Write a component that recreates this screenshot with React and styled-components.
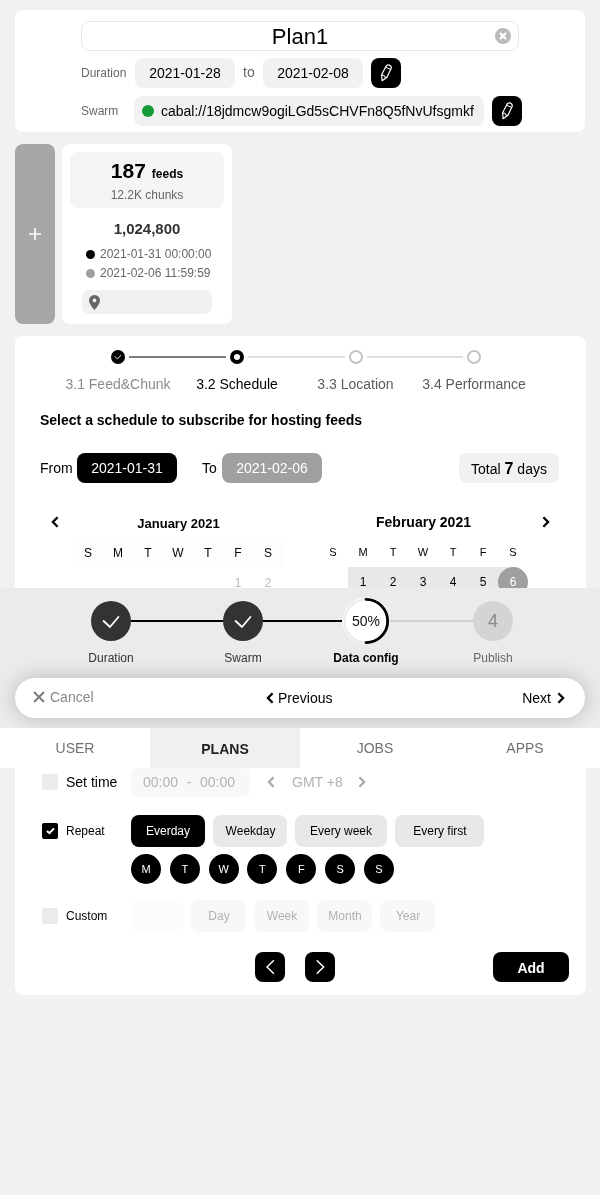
import React from "react";
import styled, { createGlobalStyle } from "styled-components";

const Global = createGlobalStyle`
  *, *::before, *::after { box-sizing: border-box; }
  body {
    margin: 0;
    background: #f1f1f1;
    font-family: "Liberation Sans", Arial, sans-serif;
    font-size: 14px;
    color: #000;
  }
`;

const Page = styled.main`
  position: relative;
  width: 600px;
  height: 1195px;
  padding: 10px 14px 0 15px;
  overflow: hidden;
  will-change: transform;
`;

const Text = styled.span`
  font-size: ${(p) => p.$size || 14}px;
  font-weight: ${(p) => (p.$bold ? 700 : 400)};
  color: ${(p) => p.$color || "#000"};
  white-space: pre;
`;

const Header = styled.section`
  width: 570px;
  height: 122px;
  padding: 11px 0 0 66px;
  border-radius: 8px;
  background: #fff;
`;

const TitleField = styled.div`
  display: flex;
  align-items: center;
  justify-content: center;
  width: 438px;
  height: 30px;
  padding: 0 7px 0 23px;
  border: 1px solid #e8e8e8;
  border-radius: 8px;
  font-size: 22px;

  span { flex: 1; padding-top: 1px; text-align: center; }
`;

const FieldRow = styled.div`
  display: flex;
  align-items: center;
  height: 30px;
  margin-top: ${(p) => p.$top}px;
`;

const FieldLabel = styled.label`
  width: ${(p) => p.$width}px;
  font-size: 12px;
  color: #666;
`;

const Joiner = styled.span`
  width: 28px;
  padding: 0 0 2px 8px;
  color: #666;
`;

const Pill = styled.div`
  display: flex;
  align-items: center;
  justify-content: center;
  width: ${(p) => p.$width || 100}px;
  height: 30px;
  border-radius: 8px;
  background: ${(p) => p.$bg || "#f1f1f1"};
  color: ${(p) => p.$color || "#000"};
`;

const SwarmPill = styled(Pill)`
  justify-content: flex-start;
  gap: 7px;
  padding-left: 8px;
`;

const Dot = styled.i`
  width: ${(p) => p.$size}px;
  height: ${(p) => p.$size}px;
  border-radius: 50%;
  background: ${(p) => p.$color};
`;

const IconButton = styled.button`
  display: flex;
  align-items: center;
  justify-content: center;
  width: 30px;
  height: 30px;
  margin-left: ${(p) => p.$left || 0}px;
  padding: 0;
  border: 0;
  border-radius: 8px;
  background: #000;
`;

const Feeds = styled.section`
  display: flex;
  gap: 7px;
  height: 180px;
  margin: 12px 0;
`;

const AddFeed = styled.button`
  display: flex;
  align-items: center;
  justify-content: center;
  width: 40px;
  padding: 0;
  border: 0;
  border-radius: 8px;
  background: #a7a7a7;
`;

const FeedCard = styled.article`
  display: flex;
  flex-direction: column;
  width: 170px;
  padding: 8px;
  border-radius: 8px;
  background: #fff;
`;

const FeedSummary = styled.div`
  display: flex;
  flex-direction: column;
  align-items: center;
  height: 56px;
  padding-top: 6px;
  border-radius: 8px;
  background: #f4f4f4;
`;

const FeedCount = styled.div`
  display: flex;
  align-items: baseline;
  gap: 6px;
  height: 30px;
  line-height: 26px;
`;

const FeedSize = styled.div`
  height: 36px;
  padding-top: 12px;
  text-align: center;
  font-size: 15px;
  font-weight: 700;
  color: #333;
`;

const FeedDate = styled.div`
  display: flex;
  align-items: center;
  gap: 5px;
  height: 19px;
  padding-left: 16px;
  font-size: 12px;
  color: #666;

  i { margin-top: 2px; }
`;

const FeedPlace = styled.div`
  display: flex;
  align-items: center;
  width: 130px;
  height: 24px;
  margin: 8px 0 0 12px;
  padding-left: 7px;
  border-radius: 8px;
  background: #f1f1f1;
`;

const Panel = styled.section`
  height: 659px;
  padding-top: 14px;
  border-radius: 8px;
  background: #fff;
`;

const Track = styled.div`
  display: flex;
  align-items: center;
  gap: 4px;
  height: 14px;
  margin-left: 96px;
`;

const TrackLine = styled.div`
  width: ${(p) => p.$width}px;
  height: 2px;
  background: ${(p) => (p.$done ? "#7d7d7d" : "#dfdfdf")};
`;

const TrackNode = styled.div`
  display: flex;
  align-items: center;
  justify-content: center;
  width: 14px;
  height: 14px;
  border: ${(p) => (p.$state === "current" ? "4px solid #000" : p.$state === "todo" ? "2px solid #c4c4c4" : "0")};
  border-radius: 50%;
  background: ${(p) => (p.$state === "done" ? "#000" : "#fff")};
`;

const TrackLabels = styled.div`
  display: grid;
  grid-template-columns: 119px 119px 118px 119px;
  margin: 12px 0 0 43.5px;
  text-align: center;
`;

const Heading = styled.h2`
  margin: 20px 0 0 25px;
  font-size: 14px;
  line-height: 16px;
`;

const RangeRow = styled.div`
  display: flex;
  align-items: center;
  height: 30px;
  margin-top: 25px;
  padding: 0 27px 0 25px;
`;

const RangeLabel = styled.span`
  width: ${(p) => p.$width}px;
  padding-left: ${(p) => p.$left || 0}px;
`;

const Total = styled(Pill)`
  align-items: baseline;
  margin-left: auto;
  line-height: 31px;
`;

const Calendars = styled.div`
  display: flex;
  height: 284px;
  padding-top: 31px;
`;

const Arrow = styled.div`
  display: flex;
  width: ${(p) => p.$width}px;
  padding-left: ${(p) => p.$left}px;
  padding-top: 2px;
`;

const Month = styled.div`
  width: 210px;
  margin-right: ${(p) => p.$right || 0}px;
`;

const MonthTitle = styled.h3`
  height: ${(p) => p.$height}px;
  margin: 0;
  padding: ${(p) => p.$top}px 0 0 1px;
  text-align: center;
  font-size: ${(p) => p.$size}px;
  line-height: 16px;
`;

const Week = styled.div`
  display: grid;
  grid-template-columns: repeat(7, 30px);
  height: 30px;
  line-height: ${(p) => p.$line || 29}px;
  text-align: center;
  font-size: ${(p) => p.$size || 12}px;
  color: ${(p) => p.$color || "#000"};
  background: ${(p) => p.$bg || "transparent"};
`;

const Day = styled.span`
  background: ${(p) => (p.$inRange ? "#e8e8e8" : "transparent")};
`;

const LastDay = styled.span`
  background: linear-gradient(to right, #e8e8e8 50%, transparent 50%);

  b {
    display: block;
    height: 30px;
    border-radius: 50%;
    font-weight: 400;
    color: #fff;
    background: #9f9f9f;
  }
`;

const OptionRow = styled.div`
  display: flex;
  align-items: center;
  height: ${(p) => p.$height}px;
  margin-bottom: ${(p) => p.$bottom}px;
  padding-left: 27px;
`;

const Checkbox = styled.div`
  display: flex;
  align-items: center;
  justify-content: center;
  width: 16px;
  height: 16px;
  margin-right: 8px;
  border-radius: 2px;
  background: ${(p) => (p.$checked ? "#000" : "#ebebeb")};
`;

const OptionLabel = styled.label`
  width: 65px;
  font-size: ${(p) => p.$size || 12}px;
`;

const TimeField = styled.div`
  display: flex;
  align-items: center;
  justify-content: space-between;
  width: 119px;
  height: 30px;
  margin-right: 17px;
  padding: 0 15px 0 12px;
  border-radius: 8px;
  background: #f8f8f8;
  color: #b3b3b3;
`;

const Zone = styled.span`
  width: 83px;
  padding: 0 0 0 17px;
  color: #b3b3b3;
`;

const Choice = styled.button`
  width: ${(p) => p.$width}px;
  height: 32px;
  margin-right: 8px;
  padding: 0 0 0 ${(p) => p.$shift || 0}px;
  border: 0;
  border-radius: 8px;
  font: 12px "Liberation Sans", Arial, sans-serif;
  color: ${(p) => p.$color || "#000"};
  background: ${(p) => p.$bg || "#e8e8e8"};
`;

const Weekdays = styled.div`
  display: flex;
  justify-content: space-between;
  width: 263px;
  margin: 0 0 16px 116px;
`;

const Weekday = styled.span`
  width: 30px;
  height: 30px;
  border-radius: 50%;
  background: #000;
  color: #fff;
  font-size: 11px;
  line-height: 30px;
  text-align: center;
`;

const PanelActions = styled.div`
  display: flex;
  gap: 20px;
  margin-top: 20px;
  padding: 0 17px 0 240px;
`;

const AddButton = styled.button`
  width: 76px;
  height: 30px;
  margin-left: auto;
  padding: 2px 0 0;
  border: 0;
  border-radius: 8px;
  background: #000;
  color: #fff;
  font: bold 14px "Liberation Sans", Arial, sans-serif;
`;

const Dock = styled.footer`
  position: absolute;
  top: 588px;
  left: 0;
  width: 600px;
  height: 180px;
  overflow: hidden;
`;

const DockBody = styled.div`
  height: 140px;
  padding-top: 9px;
  background: #ebebeb;
`;

const Stages = styled.div`
  display: flex;
  align-items: center;
  height: 48px;
  padding-left: 91px;
`;

const StageNode = styled.div`
  display: flex;
  align-items: center;
  justify-content: center;
  width: 40px;
  height: 40px;
  border-radius: 50%;
  font-size: 18px;
  color: #888;
  background: ${(p) => (p.$done ? "#333" : "#d4d4d4")};
`;

const StageLine = styled.div`
  width: ${(p) => p.$width}px;
  height: 2px;
  background: ${(p) => (p.$done ? "#000" : "#d0d0d0")};
`;

const StageLabels = styled.div`
  display: grid;
  grid-template-columns: 132px 132px 114px 140px;
  margin: 6px 0 0 45px;
  text-align: center;
  line-height: 14px;
`;

const NavBar = styled.nav`
  display: flex;
  align-items: center;
  width: 570px;
  height: 40px;
  margin: 13px 0 0 15px;
  padding: 0 20px 0 18px;
  border-radius: 20px;
  background: #fff;
  box-shadow: 0 0 20px rgba(0, 0, 0, 0.22);
`;

const NavItem = styled.div`
  display: flex;
  align-items: center;
  gap: ${(p) => p.$gap}px;
  flex: ${(p) => p.$flex || "none"};
  padding-bottom: ${(p) => p.$lift || 0}px;
  color: ${(p) => p.$color || "#000"};
`;

const Tabs = styled.nav`
  position: relative;
  display: grid;
  grid-template-columns: repeat(4, 1fr);
  height: 40px;
  line-height: 40px;
  text-align: center;
`;

const Tab = styled.span`
  background: ${(p) => (p.$active ? "#f0f0f0" : "#fff")};
  color: ${(p) => (p.$active ? "#222" : "#707070")};
  font-weight: ${(p) => (p.$active ? 700 : 400)};
  line-height: ${(p) => (p.$active ? 42 : 40)}px;
`;

const Pencil = () => (
  <svg width="12" height="18" viewBox="0 0 12 18" fill="none" stroke="#fff" strokeWidth="1.2" strokeLinejoin="round" strokeLinecap="round">
    <path d="M1.6 10.8 L6 2.2 Q7.2 .4 9.4 1.1 Q11.9 2.2 11.1 4.5 L7 13.2 L2.1 16.7 Z" />
    <path d="M6 3.4 L10.7 5.4 M1.9 11.2 L3.9 11.2 L4.6 13.2 L6.8 13.2" strokeWidth="1" />
  </svg>
);

const Chevron = ({ right, color = "#000", thin }) => (
  <svg width={thin ? 9 : 8} height={thin ? 14 : 12} viewBox={thin ? "0 0 9 14" : "0 0 8 12"} fill="none" stroke={thin ? "#fff" : color} strokeWidth={thin ? 1.5 : 2.3} strokeLinecap={thin ? "round" : "butt"}>
    {thin ? (
      <path d={right ? "M1.2 .8 L7.6 7 L1.2 13.2" : "M7.4 .8 L1 7 L7.4 13.2"} />
    ) : (
      <path d={right ? "M1.4 1.2 L6.1 6 L1.4 10.8" : "M6.6 1.2 L1.9 6 L6.6 10.8"} />
    )}
  </svg>
);

const StageCheck = () => (
  <svg width="18" height="14" viewBox="0 0 18 14" fill="none" stroke="#fff" strokeWidth="1.8" strokeLinecap="round" strokeLinejoin="round">
    <path d="M1.6 7 L8 13 L16.4 3" />
  </svg>
);

const Progress = () => (
  <svg width="48" height="48" viewBox="0 0 48 48" fill="none">
    <circle cx="24" cy="24" r="23.4" fill="#fff" />
    <circle cx="24" cy="24" r="21.5" stroke="#ebebeb" strokeWidth="2.2" />
    <path d="M24 2.3 A21.7 21.7 0 0 1 24 45.7" stroke="#000" strokeWidth="2.8" strokeLinecap="round" />
    <text x="24" y="29" textAnchor="middle" fontSize="14" fill="#111">50%</text>
  </svg>
);

const weekdays = ["S", "M", "T", "W", "T", "F", "S"];
const units = ["Day", "Week", "Month", "Year"];

export default function App() {
  return (
    <>
      <Global />
      <Page>
        <Header>
          <TitleField>
            <span>Plan1</span>
            <svg width="16" height="16" viewBox="0 0 16 16">
              <circle cx="8" cy="8" r="8" fill="#bbb" />
              <path d="M5 5 L11 11 M11 5 L5 11" stroke="#fff" strokeWidth="2.4" />
            </svg>
          </TitleField>
          <FieldRow $top={7}>
            <FieldLabel $width={54}>Duration</FieldLabel>
            <Pill>2021-01-28</Pill>
            <Joiner>to</Joiner>
            <Pill>2021-02-08</Pill>
            <IconButton $left={8}><Pencil /></IconButton>
          </FieldRow>
          <FieldRow $top={8}>
            <FieldLabel $width={53}>Swarm</FieldLabel>
            <SwarmPill $width={350}>
              <Dot $size={12} $color="#149b38" />
              <Text>cabal://18jdmcw9ogiLGd5sCHVFn8Q5fNvUfsgmkf</Text>
            </SwarmPill>
            <IconButton $left={8}><Pencil /></IconButton>
          </FieldRow>
        </Header>

        <Feeds>
          <AddFeed>
            <svg width="12" height="12" viewBox="0 0 12 12" stroke="#fff" strokeWidth="1.6">
              <path d="M6 0 V12 M0 6 H12" />
            </svg>
          </AddFeed>
          <FeedCard>
            <FeedSummary>
              <FeedCount>
                <Text $size={21} $bold>187</Text>
                <Text $size={12} $bold>feeds</Text>
              </FeedCount>
              <Text $size={12} $color="#666">12.2K chunks</Text>
            </FeedSummary>
            <FeedSize>1,024,800</FeedSize>
            <FeedDate><Dot $size={9} $color="#000" />2021-01-31 00:00:00</FeedDate>
            <FeedDate><Dot $size={9} $color="#9f9f9f" />2021-02-06 11:59:59</FeedDate>
            <FeedPlace>
              <svg width="11" height="15" viewBox="0 0 11 15">
                <path fill="#666" fillRule="evenodd" d="M5.5 0 A5.4 5.4 0 0 1 11 5.4 C11 9 5.5 15 5.5 15 C5.5 15 0 9 0 5.4 A5.4 5.4 0 0 1 5.5 0 Z M5.5 3.5 A1.9 1.9 0 1 0 5.5 7.3 A1.9 1.9 0 1 0 5.5 3.5 Z" />
              </svg>
            </FeedPlace>
          </FeedCard>
        </Feeds>

        <Panel>
          <Track>
            <TrackNode $state="done">
              <svg width="8" height="6" viewBox="0 0 8 6" fill="none" stroke="#fff" strokeWidth=".9">
                <path d="M.8 2.4 L3.4 4.9 L7.2 1" />
              </svg>
            </TrackNode>
            <TrackLine $done $width={97} />
            <TrackNode $state="current" />
            <TrackLine $width={97} />
            <TrackNode $state="todo" />
            <TrackLine $width={96} />
            <TrackNode $state="todo" />
          </Track>
          <TrackLabels>
            <Text $color="#8c8c8c">3.1 Feed&amp;Chunk</Text>
            <Text>3.2 Schedule</Text>
            <Text $color="#5c5c5c">3.3 Location</Text>
            <Text $color="#5c5c5c">3.4 Performance</Text>
          </TrackLabels>
          <Heading>Select a schedule to subscribe for hosting feeds</Heading>
          <RangeRow>
            <RangeLabel $width={37}>From</RangeLabel>
            <Pill $bg="#000" $color="#fff">2021-01-31</Pill>
            <RangeLabel $width={45} $left={25}>To</RangeLabel>
            <Pill $bg="#a0a0a0" $color="#fff">2021-02-06</Pill>
            <Total><Text>Total </Text><Text $size={16} $bold>7</Text><Text> days</Text></Total>
          </RangeRow>

          <Calendars>
            <Arrow $width={58} $left={36}><Chevron /></Arrow>
            <Month $right={35}>
              <MonthTitle $size={13} $top={2} $height={24}>January 2021</MonthTitle>
              <Week $bg="#fdfdfd" $line={30}>{weekdays.map((d, i) => <Day key={i}>{d}</Day>)}</Week>
              <Week $color="#bbb" $line={30}><Day /><Day /><Day /><Day /><Day /><Day>1</Day><Day>2</Day></Week>
            </Month>
            <Month>
              <MonthTitle $size={14} $top={0} $height={23}>February 2021</MonthTitle>
              <Week $size={11} $line={31}>{weekdays.map((d, i) => <Day key={i}>{d}</Day>)}</Week>
              <Week $line={30}>
                <Day />
                {[1, 2, 3, 4, 5].map((d) => <Day key={d} $inRange>{d}</Day>)}
                <LastDay><b>6</b></LastDay>
              </Week>
            </Month>
            <Arrow $width={30} $left={14}><Chevron right /></Arrow>
          </Calendars>

          <OptionRow $height={30} $bottom={18}>
            <Checkbox />
            <OptionLabel $size={14}>Set time</OptionLabel>
            <TimeField><span>00:00</span><span>-</span><span>00:00</span></TimeField>
            <Chevron color="#a8a8a8" />
            <Zone>GMT +8</Zone>
            <Chevron right color="#a8a8a8" />
          </OptionRow>
          <OptionRow $height={32} $bottom={7}>
            <Checkbox $checked>
              <svg width="9" height="8" viewBox="0 0 9 8" fill="none" stroke="#fff" strokeWidth="2">
                <path d="M1 4 L3.4 6.2 L8 1.4" />
              </svg>
            </Checkbox>
            <OptionLabel>Repeat</OptionLabel>
            <Choice $width={74} $bg="#000" $color="#fff">Everday</Choice>
            <Choice $width={74} $shift={1}>Weekday</Choice>
            <Choice $width={92}>Every week</Choice>
            <Choice $width={89} $shift={1}>Every first</Choice>
          </OptionRow>
          <Weekdays>
            {["M", "T", "W", "T", "F", "S", "S"].map((d, i) => <Weekday key={i}>{d}</Weekday>)}
          </Weekdays>
          <OptionRow $height={32} $bottom={0}>
            <Checkbox />
            <OptionLabel>Custom</OptionLabel>
            <Choice $width={52} $bg="#fcfcfc" />
            {units.map((u) => <Choice key={u} $width={55} $shift={1} $bg="#f8f8f8" $color="#b0b0b0">{u}</Choice>)}
          </OptionRow>
          <PanelActions>
            <IconButton><Chevron thin /></IconButton>
            <IconButton><Chevron thin right /></IconButton>
            <AddButton>Add</AddButton>
          </PanelActions>
        </Panel>

        <Dock>
          <DockBody>
            <Stages>
              <StageNode $done><StageCheck /></StageNode>
              <StageLine $width={92} $done />
              <StageNode $done><StageCheck /></StageNode>
              <StageLine $width={79} $done />
              <Progress />
              <StageLine $width={83} />
              <StageNode>4</StageNode>
            </Stages>
            <StageLabels>
              <Text $size={12} $color="#333">Duration</Text>
              <Text $size={12} $color="#333">Swarm</Text>
              <Text $size={12} $bold>Data config</Text>
              <Text $size={12} $color="#666">Publish</Text>
            </StageLabels>
            <NavBar>
              <NavItem $flex="0 0 233px" $gap={5} $color="#888" $lift={2}>
                <svg width="12" height="12" viewBox="0 0 12 12" stroke="#777" strokeWidth="1.8">
                  <path d="M1 1 L11 11 M11 1 L1 11" />
                </svg>
                Cancel
              </NavItem>
              <NavItem $flex="1" $gap={4}><Chevron />Previous</NavItem>
              <NavItem $gap={6}>Next<Chevron right /></NavItem>
            </NavBar>
          </DockBody>
          <Tabs>
            <Tab>USER</Tab>
            <Tab $active>PLANS</Tab>
            <Tab>JOBS</Tab>
            <Tab>APPS</Tab>
          </Tabs>
        </Dock>
      </Page>
    </>
  );
}
